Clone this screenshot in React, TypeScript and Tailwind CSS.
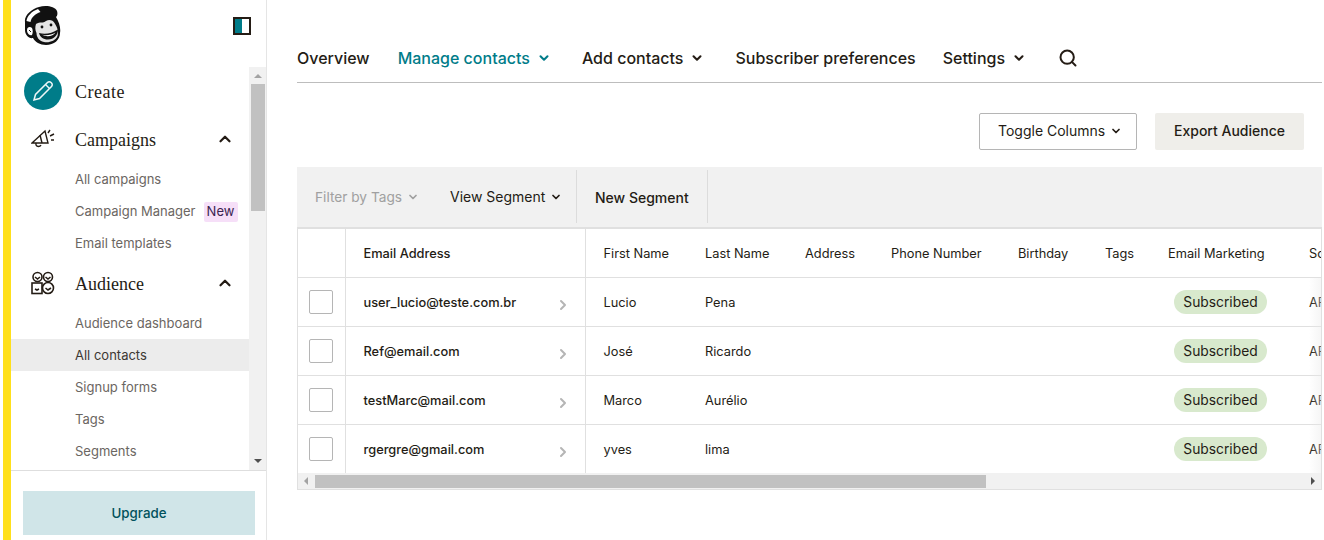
import { ChevronDown, ChevronRight, ChevronUp, Search } from "lucide-react";

const graphik = "font-['Inter','Liberation_Sans',sans-serif]";
const serif = "font-['Liberation_Serif',serif]";

const rows = [
  { email: "user_lucio@teste.com.br", first: "Lucio", last: "Pena" },
  { email: "Ref@email.com", first: "José", last: "Ricardo" },
  { email: "testMarc@mail.com", first: "Marco", last: "Aurélio" },
  { email: "rgergre@gmail.com", first: "yves", last: "lima" },
];

function Logo() {
  return (
    <svg width="38" height="40" viewBox="0 0 38 40" className="shrink-0">
      <path d="M1 16 C0 9 8 3 15 1 C21 -1 31 0 33 5 C34 8 33 10 32 11 C35 16 37 22 36 27 C36 34 30 39 22 39 C16 39 11 36 9 32 C5 33 1 29 1 24 Z" fill="#111" />
      <path d="M2.5 15 C3 10 8 5 14 3 L16.5 6 C11 8 7.5 11 6.5 16 Z" fill="#fff" />
      <path d="M3 24 C3 21 6 20 8 22 C9 24 9 27 8 29 C5 30 3 27 3 24 Z" fill="#fff" />
      <path d="M5 24 L7 26" stroke="#111" strokeWidth="1" />
      <path d="M12 18 C16 15 19 18 22 15 C25 13 29 14 30.5 17 C33 21 35 25 33.5 30 C31.5 35 25 37 20 36 C15 35 12.5 31 12.5 27 C11 24 11 21 12 18 Z" fill="#e4e4e4" />
      <circle cx="18" cy="21" r="1.4" fill="#111" />
      <circle cx="27" cy="19" r="1.4" fill="#111" />
      <path d="M15 27 C21 28.5 28 27.5 34 23.5 C34 29 30 33.5 24 33.5 C19 33.5 16 31 15 27 Z" fill="#111" />
      <path d="M18 28.8 C23 29.8 27.5 28.8 31.5 26.5 C29.5 30 23 31.5 18 28.8 Z" fill="#fff" />
    </svg>
  );
}

function Megaphone() {
  return (
    <svg width="24" height="20" viewBox="0 0 24 20" fill="none" stroke="#241c15" strokeWidth="1.4" className="shrink-0">
      <path d="M1 14 L14 2 L17 14 Z" />
      <path d="M5 14 L5 16 C6 18 9 18 10 16" />
      <path d="M9 6 L11 14" />
      <path d="M17 4 L19 1 M19 7 L23 5 M20 11 L23 11" />
    </svg>
  );
}

function AudienceIcon() {
  return (
    <svg width="24" height="24" viewBox="0 0 24 24" fill="none" stroke="#241c15" strokeWidth="1.6" className="shrink-0">
      <circle cx="6.5" cy="6" r="4.5" />
      <circle cx="17" cy="6" r="4.5" />
      <path d="M4 6 L6.5 8 L9 6 M14.5 6 L17 8 L19.5 6" />
      <rect x="1" y="12" width="10" height="10.5" />
      <path d="M4 18 L6 19 L8 18" />
      <circle cx="17" cy="17" r="5.5" />
      <path d="M14.5 17 L17 19 L20 17" />
    </svg>
  );
}

function SubItem({ label, active, badge }: { label: string; active?: boolean; badge?: boolean }) {
  return (
    <div className={`flex h-8 items-center pl-[64px] pt-[2px] text-[13px] ${active ? "bg-[#ececec] text-[#3d3833]" : "text-[#6b6662]"}`}>
      <span>{label}</span>
      {badge && <span className="ml-[8px] flex h-5 w-[34px] items-center justify-center rounded-[2px] bg-[#f6dff8] text-[#3b2450]">New</span>}
    </div>
  );
}

function Scrollbar() {
  return (
    <div className="flex w-[17px] shrink-0 flex-col items-center bg-[#f1f1f1]">
      <div className="mt-[7px] h-0 w-0 border-x-[4px] border-b-[4px] border-x-transparent border-b-[#a3a3a3]" />
      <div className="mt-[6px] h-[127px] w-[14px] bg-[#c1c1c1]" />
      <div className="mt-auto mb-[7px] h-0 w-0 border-x-[4px] border-t-[4px] border-x-transparent border-t-[#505050]" />
    </div>
  );
}

function Sidebar() {
  return (
    <aside className={`flex w-[256px] shrink-0 flex-col border-r border-[#e5e5e5] ${graphik}`}>
      <div className="flex h-[67px] shrink-0 items-start justify-between pl-[13px] pr-[15px] pt-[6px]">
        <Logo />
        <div className="mt-[11px] flex h-[18px] w-[18px] border-2 border-[#241c15]">
          <div className="w-[7px] bg-[#007c89]" />
        </div>
      </div>
      <div className="flex min-h-0 flex-1">
        <nav className="min-w-0 flex-1">
          <div className={`flex h-12 items-center pl-[13px] text-[18px] text-[#241c15] ${serif}`}>
            <div className="mr-[13px] flex h-[38px] w-[38px] items-center justify-center rounded-full bg-[#007c89]">
              <svg width="22" height="22" viewBox="0 0 22 22" fill="none" stroke="#eef6f7" strokeWidth="1.5">
                <path d="M2 20 L3.5 14.5 L15.5 2.5 C16.5 1.5 18 1.5 19 2.5 L19.5 3 C20.5 4 20.5 5.5 19.5 6.5 L7.5 18.5 Z" />
                <path d="M13.5 4.5 L17.5 8.5" />
              </svg>
            </div>
            <span className="pt-[2px] tracking-[0.5px]">Create</span>
          </div>
          <div className={`flex h-12 items-center pl-[20px] pr-[15px] text-[18px] text-[#241c15] ${serif}`}>
            <Megaphone />
            <span className="ml-[20px] flex-1 pt-[2px]">Campaigns</span>
            <ChevronUp size={18} strokeWidth={3} />
          </div>
          <SubItem label="All campaigns" />
          <SubItem label="Campaign Manager" badge />
          <SubItem label="Email templates" />
          <div className={`flex h-12 items-center pl-[20px] pr-[15px] text-[18px] text-[#241c15] ${serif}`}>
            <AudienceIcon />
            <span className="ml-[20px] flex-1 pt-[2px]">Audience</span>
            <ChevronUp size={18} strokeWidth={3} />
          </div>
          <SubItem label="Audience dashboard" />
          <SubItem label="All contacts" active />
          <SubItem label="Signup forms" />
          <SubItem label="Tags" />
          <SubItem label="Segments" />
        </nav>
        <Scrollbar />
      </div>
      <div className="h-[70px] shrink-0 border-t border-[#dedede] px-[12px] pt-[20px]">
        <div className="flex h-[44px] w-[232px] items-center justify-center bg-[#d0e5e8] pt-[2px] text-[13.3px] font-medium text-[#00525c]">
          Upgrade
        </div>
      </div>
    </aside>
  );
}

function TopNav() {
  return (
    <div className="flex h-[48px] items-center border-b border-[#bdbdbd] pb-[2px] text-[16px] font-medium text-[#241c15]">
      <span className="mr-[28px]">Overview</span>
      <span className="mr-[31px] flex items-center text-[#007c89]">
        Manage contacts
        <ChevronDown size={14} strokeWidth={3.5} className="ml-[7px]" />
      </span>
      <span className="mr-[31px] flex items-center">
        Add contacts
        <ChevronDown size={14} strokeWidth={3.5} className="ml-[7px]" />
      </span>
      <span className="mr-[27px]">Subscriber preferences</span>
      <span className="mr-[32px] flex items-center">
        Settings
        <ChevronDown size={14} strokeWidth={3.5} className="ml-[7px]" />
      </span>
      <Search size={20} strokeWidth={2.4} />
    </div>
  );
}

function ContactsTable() {
  const th = "h-[48px] border-b border-[#e0e0e0] px-[18px] pt-[2px] text-left text-[12.8px] whitespace-nowrap text-[#241c15]";
  const td = "h-[49px] border-[#e0e0e0] px-[18px] text-[12.8px] text-[#241c15]";
  return (
    <div className="border-x border-b border-[#e0e0e0]">
      <div className="relative overflow-hidden">
        <table className="w-[1100px] table-fixed border-collapse">
          <colgroup>
            <col className="w-[47px]" />
            <col className="w-[240px]" />
            <col className="w-[102px]" />
            <col className="w-[100px]" />
            <col className="w-[86px]" />
            <col className="w-[127px]" />
            <col className="w-[87px]" />
            <col className="w-[63px]" />
            <col className="w-[141px]" />
            <col className="w-[107px]" />
          </colgroup>
          <thead>
            <tr>
              <th className={`${th} border-r`} />
              <th className={`${th} border-r font-medium`}>Email Address</th>
              <th className={`${th} font-normal`}>First Name</th>
              <th className={`${th} font-normal`}>Last Name</th>
              <th className={`${th} font-normal`}>Address</th>
              <th className={`${th} font-normal`}>Phone Number</th>
              <th className={`${th} font-normal`}>Birthday</th>
              <th className={`${th} font-normal`}>Tags</th>
              <th className={`${th} font-normal`}>Email Marketing</th>
              <th className={`${th} font-normal`}>Source</th>
            </tr>
          </thead>
          <tbody>
            {rows.map((row, i) => {
              const border = i === 3 ? "" : "border-b";
              const cell = `${td} ${border} pt-[2px]`;
              return (
                <tr key={i}>
                  <td className={`${td} ${border} border-r pl-[11px] pr-0`}>
                    <div className="h-6 w-6 rounded-[2px] border border-[#b5b5b5]" />
                  </td>
                  <td className={`${cell} border-r font-medium`}>
                    <div className="flex items-center justify-between">
                      {row.email}
                      <ChevronRight size={16} strokeWidth={3} className="mt-[5px] mr-[-4px] text-[#b5b5b5]" />
                    </div>
                  </td>
                  <td className={cell}>{row.first}</td>
                  <td className={cell}>{row.last}</td>
                  <td className={cell} />
                  <td className={cell} />
                  <td className={cell} />
                  <td className={cell} />
                  <td className={`${td} ${border}`}>
                    <span className="ml-[6px] inline-flex h-6 w-[93px] items-center justify-center rounded-full bg-[#d8e9cd] pt-[2px] text-[13.8px]">
                      Subscribed
                    </span>
                  </td>
                  <td className={`${cell} whitespace-nowrap`}>API - Generic</td>
                </tr>
              );
            })}
          </tbody>
        </table>
        <div className="absolute bottom-0 right-0 top-[49px] w-3 bg-gradient-to-r from-transparent to-[#e8e8e8]/40" />
      </div>
      <div className="flex h-[16px] items-center bg-[#f1f1f1]">
        <div className="ml-[6px] h-0 w-0 border-y-[4px] border-r-[4px] border-y-transparent border-r-[#a3a3a3]" />
        <div className="ml-[7px] h-[13px] w-[671px] bg-[#c1c1c1]" />
        <div className="ml-auto mr-[6px] h-0 w-0 border-y-[4px] border-l-[4px] border-y-transparent border-l-[#505050]" />
      </div>
    </div>
  );
}

export default function App() {
  return (
    <div className={`flex h-[540px] w-[1324px] overflow-hidden bg-white pl-[3px] ${graphik}`}>
      <div className="w-2 shrink-0 bg-[#ffe01b]" />
      <Sidebar />
      <main className="w-[1055px] shrink-0 pl-[30px] pt-[35px]">
        <TopNav />
        <div className="mt-[30px] flex justify-end gap-[18px] pr-[18px]">
          <button className="flex h-[37px] w-[158px] items-center gap-[5px] rounded-[2px] border border-[#b5b5b5] pb-[2px] pl-[18px] text-[14px] text-[#241c15]">
            Toggle Columns
            <ChevronDown size={12} strokeWidth={3.5} />
          </button>
          <button className="h-[37px] w-[149px] rounded-[2px] bg-[#efeeea] pb-[2px] text-[14px] font-medium text-[#241c15]">
            Export Audience
          </button>
        </div>
        <div className="mt-[17px] flex h-[60px] items-center bg-[#f1f1f1] pb-[1px] text-[14px]">
          <span className="ml-[18px] flex w-[135px] items-center gap-[5px] pt-[2px] text-[13.7px] text-[#a0a0a0]">
            Filter by Tags
            <ChevronDown size={12} strokeWidth={3.5} />
          </span>
          <span className="flex w-[126px] items-center gap-[5px] text-[#241c15]">
            View Segment
            <ChevronDown size={12} strokeWidth={3.5} />
          </span>
          <span className="flex h-[53px] w-[132px] items-center border-x border-[#dcdcdc] pl-[18px] pt-[2px] font-medium text-[#241c15]">
            New Segment
          </span>
        </div>
        <div className="h-[2px] bg-[#e0e0e0]" />
        <ContactsTable />
      </main>
    </div>
  );
}
